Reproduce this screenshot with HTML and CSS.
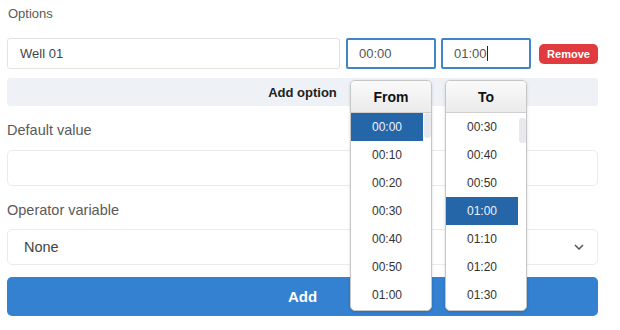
FILE: index.html
```html
<!DOCTYPE html>
<html lang="en">
<head>
  <meta charset="UTF-8">
  <meta name="viewport" content="width=device-width, initial-scale=1">
  <title>Options</title>
  <link rel="stylesheet" href="styles.css">
</head>
<body>
  <div class="form">
    <div class="label-small">Options</div>

    <div class="option-row">
      <div class="field option-name">Well 01</div>

      <div class="time-pick first">
        <div class="field time">00:00</div>
        <div class="dropdown">
          <div class="dd-head">From</div>
          <div class="dd-list">
            <div class="dd-items">
              <div class="dd-item selected">00:00</div>
              <div class="dd-item">00:10</div>
              <div class="dd-item">00:20</div>
              <div class="dd-item">00:30</div>
              <div class="dd-item">00:40</div>
              <div class="dd-item">00:50</div>
              <div class="dd-item">01:00</div>
            </div>
            <div class="dd-track"><div class="dd-thumb top"></div></div>
          </div>
        </div>
      </div>

      <div class="time-pick second">
        <div class="field time">01:00<span class="caret"></span></div>
        <div class="dropdown">
          <div class="dd-head">To</div>
          <div class="dd-list">
            <div class="dd-items">
              <div class="dd-item">00:30</div>
              <div class="dd-item">00:40</div>
              <div class="dd-item">00:50</div>
              <div class="dd-item selected">01:00</div>
              <div class="dd-item">01:10</div>
              <div class="dd-item">01:20</div>
              <div class="dd-item">01:30</div>
            </div>
            <div class="dd-track"><div class="dd-thumb lower"></div></div>
          </div>
        </div>
      </div>

      <button class="remove">Remove</button>
    </div>

    <button class="add-option">Add option</button>

    <div class="label">Default value</div>
    <div class="field big"></div>

    <div class="label">Operator variable</div>
    <div class="field big select">
      <span>None</span>
      <svg class="chevron" width="10" height="6" viewBox="0 0 10 6">
        <path d="M1 1 L5 5 L9 1" fill="none" stroke="#555" stroke-width="1.5"/>
      </svg>
    </div>

    <button class="add-btn">Add</button>
  </div>
</body>
</html>
```

FILE: styles.css
```css
* {
  box-sizing: border-box;
  margin: 0;
  padding: 0;
}
body {
  font-family: "Liberation Sans", Arial, sans-serif;
  color: #333;
  background: #fff;
}
button {
  border: 0;
  font-family: inherit;
  cursor: pointer;
}
.form {
  padding: 5px 22px 0 7px;
}
.label-small {
  font-size: 13px;
  line-height: 18px;
  color: #5a5a5a;
  padding-left: 1px;
}
.option-row {
  display: flex;
  align-items: center;
  height: 31px;
  margin-top: 15px;
}
.field {
  display: flex;
  align-items: center;
  height: 31px;
  border: 1px solid #e3e3e3;
  border-radius: 3px;
  font-size: 13px;
  color: #444;
  padding-left: 12px;
  background: #fff;
}
.option-name {
  width: 333px;
}
.time-pick {
  position: relative;
  width: 90px;
}
.time-pick.first {
  margin-left: 6px;
}
.time-pick.second {
  margin-left: 5px;
}
.time {
  border: 2px solid #4285c7;
  border-radius: 2px;
  padding-left: 11px;
  color: #555;
}
.caret {
  display: inline-block;
  width: 1px;
  height: 15px;
  background: #222;
}
.remove {
  margin-left: 8px;
  width: 59px;
  height: 20px;
  border-radius: 5px;
  background: #e23b3f;
  color: #fff;
  font-weight: bold;
  font-size: 11px;
}
.add-option {
  display: block;
  width: 100%;
  height: 28px;
  margin-top: 9px;
  border-radius: 3px;
  background: #eef2f7;
  color: #222;
  font-weight: bold;
  font-size: 13px;
}
.label {
  font-size: 14.5px;
  line-height: 20px;
  color: #5a5a5a;
  margin-top: 14px;
}
.big {
  height: 36px;
  margin-top: 10px;
  border-color: #ebebeb;
  border-radius: 5px;
}
.select {
  margin-top: 9px;
  justify-content: space-between;
  padding: 0 13px 0 16px;
  font-size: 14.5px;
  color: #444;
}
.add-btn {
  display: block;
  width: 100%;
  height: 39px;
  margin-top: 12px;
  border-radius: 5px;
  background: #3381d0;
  color: #fff;
  font-weight: bold;
  font-size: 15px;
}

/* open time dropdowns */
.dropdown {
  position: absolute;
  top: 42px;
  left: 4px;
  width: 82px;
  height: 231px;
  border: 1px solid #c6c6c6;
  border-radius: 5px;
  background: #fff;
  box-shadow: 0 1px 3px rgba(0, 0, 0, 0.15);
  overflow: hidden;
  z-index: 5;
}
.dd-head {
  height: 32px;
  border-bottom: 1px solid #cfcfcf;
  background: linear-gradient(#fafafa, #ebebeb);
  display: flex;
  align-items: center;
  justify-content: center;
  font-weight: bold;
  font-size: 14px;
  color: #111;
}
.dd-list {
  display: flex;
  height: 197px;
  overflow: hidden;
}
.dd-items {
  width: 72px;
}
.dd-item {
  height: 28px;
  display: flex;
  align-items: center;
  justify-content: center;
  font-size: 12px;
  color: #333;
}
.dd-item.selected {
  background: #2466a7;
  color: #eef4ff;
}
.dd-track {
  width: 8px;
  padding-left: 1px;
}
.dd-thumb {
  width: 7px;
  height: 25px;
  border-radius: 3px;
  background: #e7e9ec;
}
.dd-thumb.lower {
  margin-top: 5px;
}
```
